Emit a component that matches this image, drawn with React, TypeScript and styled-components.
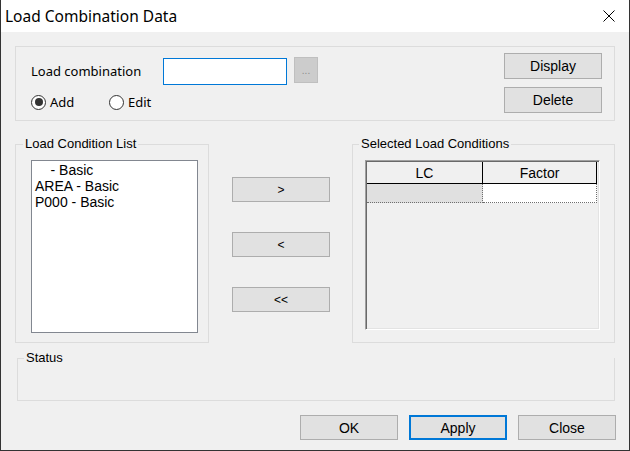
import styled, { createGlobalStyle } from "styled-components";

const UI_FONT = `"Noto Sans", "Segoe UI", sans-serif`;
const CLASSIC_FONT = `"Liberation Sans", Arial, sans-serif`;

const GlobalStyle = createGlobalStyle`
  html, body {
    margin: 0;
    padding: 0;
    background: #f0f0f0;
  }
  body {
    font-family: ${CLASSIC_FONT};
    color: #000;
  }
  * {
    box-sizing: border-box;
  }
`;

const S = {
  Window: styled.div`
    width: 630px;
    height: 451px;
    display: flex;
    flex-direction: column;
    background: #f0f0f0;
    border: 1px solid #333;
    border-top: none;
    overflow: hidden;
  `,
  TitleBar: styled.div`
    flex: none;
    height: 32px;
    display: flex;
    align-items: center;
    padding-left: 4px;
    background: #fff;
  `,
  Title: styled.div`
    flex: 1;
    font-family: ${UI_FONT};
    font-size: 15.5px;
    line-height: 20px;
  `,
  CloseBox: styled.div`
    width: 40px;
    height: 32px;
    display: flex;
    align-items: center;
    justify-content: center;
  `,
  Body: styled.div`
    flex: 1;
    display: flex;
    flex-direction: column;
    padding: 14px 14px 0;
  `,
  TopGroup: styled.div`
    flex: none;
    height: 75px;
    display: flex;
    padding: 0 12px 0 15px;
    border: 1px solid #dcdcdc;
  `,
  LeftCol: styled.div`
    display: flex;
    flex-direction: column;
    padding-top: 10px;
  `,
  FieldRow: styled.div`
    display: flex;
    align-items: flex-start;
    height: 28px;
  `,
  FieldLabel: styled.div`
    width: 132px;
    font-family: ${UI_FONT};
    font-size: 13px;
    line-height: 28px;
  `,
  Input: styled.div`
    width: 124px;
    height: 27px;
    margin-top: 1px;
    background: #fff;
    border: 1px solid #0078d7;
  `,
  DotsButton: styled.div`
    width: 24px;
    height: 26px;
    margin-left: 7px;
    display: flex;
    align-items: flex-end;
    justify-content: center;
    padding-bottom: 6px;
    background: #cccccc;
    border: 1px solid #bfbfbf;
    color: #8c8c8c;
    font-family: ${CLASSIC_FONT};
    font-size: 10px;
    line-height: 10px;
  `,
  RadioRow: styled.div`
    display: flex;
    align-items: center;
    height: 16px;
    margin-top: 9px;
  `,
  RadioItem: styled.label<{ $width?: number }>`
    display: flex;
    align-items: center;
    width: ${(p) => (p.$width ? `${p.$width}px` : "auto")};
    font-family: ${UI_FONT};
    font-size: 13px;
    line-height: 16px;
  `,
  RadioCircle: styled.span<{ $checked?: boolean }>`
    width: 15px;
    height: 15px;
    margin-right: 4px;
    display: flex;
    align-items: center;
    justify-content: center;
    border: 1px solid #333;
    border-radius: 50%;
    background: #fff;

    &::after {
      content: "";
      width: 8px;
      height: 8px;
      border-radius: 50%;
      background: ${(p) => (p.$checked ? "#333" : "transparent")};
    }
  `,
  RightCol: styled.div`
    margin-left: auto;
    display: flex;
    flex-direction: column;
    gap: 8px;
    padding-top: 6px;
  `,
  Button: styled.div<{ $h?: number; $primary?: boolean; $size?: number }>`
    width: 98px;
    height: ${(p) => p.$h ?? 25}px;
    display: flex;
    align-items: center;
    justify-content: center;
    background: #e1e1e1;
    border: ${(p) => (p.$primary ? "2px solid #0078d7" : "1px solid #adadad")};
    font-family: ${CLASSIC_FONT};
    font-size: ${(p) => p.$size ?? 14}px;
    line-height: 16px;
  `,
  MiddleRow: styled.div`
    flex: none;
    display: flex;
    height: 199px;
    margin-top: 23px;
  `,
  Group: styled.div<{ $width: number; $offset?: number }>`
    display: flex;
    flex-direction: column;
    width: ${(p) => p.$width}px;
    margin-left: ${(p) => p.$offset ?? 0}px;
    border: 1px solid #dcdcdc;
  `,
  Caption: styled.div<{ $indent: number }>`
    align-self: flex-start;
    height: 14px;
    margin: -8px 0 0 ${(p) => p.$indent}px;
    padding: 0 2px;
    background: #f0f0f0;
    font-family: ${CLASSIC_FONT};
    font-size: 13px;
    line-height: 14px;
  `,
  ListBox: styled.div`
    width: 167px;
    height: 173px;
    margin: 9px 0 0 15px;
    padding: 1px 3px;
    background: #fff;
    border: 1px solid #828790;
    font-size: 14px;
    line-height: 16px;
  `,
  ListItem: styled.div`
    white-space: pre;
  `,
  ArrowCol: styled.div`
    width: 98px;
    margin-left: 23px;
    display: flex;
    flex-direction: column;
    gap: 30px;
    padding-top: 33px;
  `,
  Grid: styled.div`
    width: 235px;
    height: 170px;
    margin: 9px 0 0 12px;
    padding: 1px 0 0 1px;
    background: #f0f0f0;
    border: 1px solid;
    border-color: #a0a0a0 #fff #fff #a0a0a0;
    box-shadow: inset 1px 1px 0 #696969, inset -1px -1px 0 #e3e3e3;
  `,
  GridRow: styled.div<{ $h: number }>`
    display: grid;
    grid-template-columns: 116px 114px;
    height: ${(p) => p.$h}px;
  `,
  HeadCell: styled.div`
    display: flex;
    align-items: center;
    justify-content: center;
    background: #f0f0f0;
    border-right: 1px solid #000;
    border-bottom: 1px solid #000;
    font-size: 14px;
  `,
  Cell: styled.div<{ $fixed?: boolean }>`
    background: ${(p) => (p.$fixed ? "#e0e0e0" : "#fff")};
    border-right: 1px dotted #6e6e6e;
    border-bottom: 1px dotted #6e6e6e;
  `,
  StatusGroup: styled.div`
    flex: none;
    height: 43px;
    margin: 15px 0 0 2px;
    border: 1px solid #dcdcdc;
  `,
  Footer: styled.div`
    display: flex;
    justify-content: flex-end;
    gap: 11px;
    margin: 14px -1px 0 0;
  `,
};

const CloseIcon = () => (
  <svg width="12" height="12" viewBox="0 0 12 12">
    <path d="M0.5 0.5 L11.5 11.5 M11.5 0.5 L0.5 11.5" stroke="#000" strokeWidth="1" fill="none" />
  </svg>
);

const conditions = ["    - Basic", "AREA - Basic", "P000 - Basic"];

export default function App() {
  return (
    <>
      <GlobalStyle />
      <S.Window>
        <S.TitleBar>
          <S.Title>Load Combination Data</S.Title>
          <S.CloseBox>
            <CloseIcon />
          </S.CloseBox>
        </S.TitleBar>

        <S.Body>
          <S.TopGroup>
            <S.LeftCol>
              <S.FieldRow>
                <S.FieldLabel>Load combination</S.FieldLabel>
                <S.Input />
                <S.DotsButton>...</S.DotsButton>
              </S.FieldRow>
              <S.RadioRow>
                <S.RadioItem $width={78}>
                  <S.RadioCircle $checked />
                  Add
                </S.RadioItem>
                <S.RadioItem>
                  <S.RadioCircle />
                  Edit
                </S.RadioItem>
              </S.RadioRow>
            </S.LeftCol>
            <S.RightCol>
              <S.Button $h={26}>Display</S.Button>
              <S.Button $h={26}>Delete</S.Button>
            </S.RightCol>
          </S.TopGroup>

          <S.MiddleRow>
            <S.Group $width={194}>
              <S.Caption $indent={7}>Load Condition List</S.Caption>
              <S.ListBox>
                {conditions.map((c) => (
                  <S.ListItem key={c}>{c}</S.ListItem>
                ))}
              </S.ListBox>
            </S.Group>

            <S.ArrowCol>
              <S.Button $size={12}>&gt;</S.Button>
              <S.Button $size={12}>&lt;</S.Button>
              <S.Button $size={12}>&lt;&lt;</S.Button>
            </S.ArrowCol>

            <S.Group $width={263} $offset={22}>
              <S.Caption $indent={6}>Selected Load Conditions</S.Caption>
              <S.Grid>
                <S.GridRow $h={22}>
                  <S.HeadCell>LC</S.HeadCell>
                  <S.HeadCell>Factor</S.HeadCell>
                </S.GridRow>
                <S.GridRow $h={19}>
                  <S.Cell $fixed />
                  <S.Cell />
                </S.GridRow>
              </S.Grid>
            </S.Group>
          </S.MiddleRow>

          <S.StatusGroup>
            <S.Caption $indent={6}>Status</S.Caption>
          </S.StatusGroup>

          <S.Footer>
            <S.Button>OK</S.Button>
            <S.Button $primary>Apply</S.Button>
            <S.Button>Close</S.Button>
          </S.Footer>
        </S.Body>
      </S.Window>
    </>
  );
}
